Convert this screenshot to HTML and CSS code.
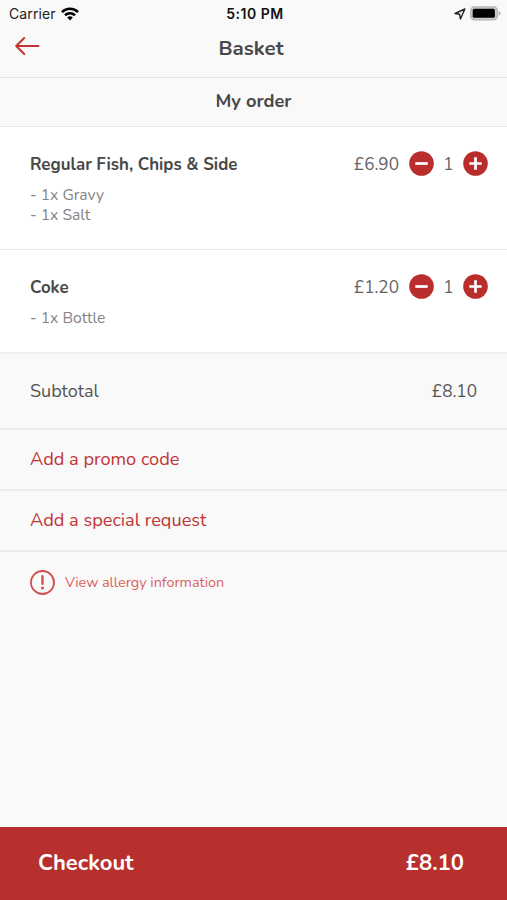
FILE: index.html
```html
<!DOCTYPE html>
<html lang="en">
<head>
<meta charset="utf-8">
<title>Basket</title>
<link rel="stylesheet" href="styles.css">
</head>
<body>
<div class="screen">
  <header class="top">
    <div class="status">
      <div class="carrier"><span>Carrier</span>
        <svg width="18" height="14" viewBox="0 0 18 14"><g fill="none" stroke="#000" stroke-width="2.6"><path d="M1 5.1a11.4 11.4 0 0 1 16 0"/><path d="M4 8.3a7.2 7.2 0 0 1 10 0"/></g><path d="M9 13.4 6.2 10.5a4 4 0 0 1 5.6 0z"/></svg>
      </div>
      <div class="clock">5:10 PM</div>
      <div class="indicators">
        <svg width="12" height="12" viewBox="0 0 12 12"><path d="M10.9 1 1 5.5l4.6.8.8 4.7z" fill="none" stroke="#222" stroke-width="1.4" stroke-linejoin="round"/></svg>
        <svg width="31" height="15" viewBox="0 0 31 15"><rect x=".8" y=".8" width="26.4" height="13" rx="3.6" fill="#ccc" stroke="#b4b4b4" stroke-width="1.3"/><rect x="2.7" y="2.8" width="22.2" height="9" rx="1.6"/><path d="M28.7 5c2.3.8 2.3 3.8 0 4.6z" fill="#aaa"/></svg>
      </div>
    </div>
    <div class="nav">
      <svg class="back" width="26" height="20" viewBox="0 0 26 20"><path d="M23.5 10H1.5M9.2 2 1.2 10l8 8" fill="none" stroke="#c23331" stroke-width="2" stroke-linecap="round" stroke-linejoin="round"/></svg>
      <h1>Basket</h1>
    </div>
  </header>
  <h2 class="section">My order</h2>

  <section class="item">
    <div class="line">
      <h3>Regular Fish, Chips &amp; Side</h3>
      <span class="price">£6.90</span>
      <svg class="btn" width="25" height="25" viewBox="0 0 25 25"><circle cx="12.5" cy="12.5" r="12.3"/><path d="M6.3 12.5h12.4"/></svg>
      <span class="qty">1</span>
      <svg class="btn" width="25" height="25" viewBox="0 0 25 25"><circle cx="12.5" cy="12.5" r="12.3"/><path d="M6.3 12.5h12.4M12.5 6.3v12.4"/></svg>
    </div>
    <ul><li>- 1x Gravy</li><li>- 1x Salt</li></ul>
  </section>

  <section class="item short">
    <div class="line">
      <h3>Coke</h3>
      <span class="price">£1.20</span>
      <svg class="btn" width="25" height="25" viewBox="0 0 25 25"><circle cx="12.5" cy="12.5" r="12.3"/><path d="M6.3 12.5h12.4"/></svg>
      <span class="qty">1</span>
      <svg class="btn" width="25" height="25" viewBox="0 0 25 25"><circle cx="12.5" cy="12.5" r="12.3"/><path d="M6.3 12.5h12.4M12.5 6.3v12.4"/></svg>
    </div>
    <ul><li>- 1x Bottle</li></ul>
  </section>

  <div class="subtotal"><span>Subtotal</span><span class="sum">£8.10</span></div>
  <div class="action"><span>Add a promo code</span></div>
  <div class="action"><span>Add a special request</span></div>
  <div class="allergy">
    <svg width="25" height="25" viewBox="0 0 25 25"><circle cx="12.5" cy="12.5" r="11.5" fill="none" stroke="#d14c4c" stroke-width="1.8"/><path d="M12.5 6.2v7.7" stroke="#d14c4c" stroke-width="2.3" stroke-linecap="round"/><circle cx="12.5" cy="18" r="1.5" fill="#d14c4c"/></svg>
    <span>View allergy information</span>
  </div>
  <footer class="checkout"><span>Checkout</span><span class="total">£8.10</span></footer>
</div>
</body>
</html>
```

FILE: styles.css
```css
* { box-sizing: border-box; }
body { margin: 0; background: #f9f9f9; }
h1, h2, h3, ul { margin: 0; padding: 0; }
svg { display: block; flex: none; }
.screen {
  width: 507px;
  height: 900px;
  display: flex;
  flex-direction: column;
  background: #f9f9f9;
  color: #484848;
  font-family: Nunito, Lato, sans-serif;
  white-space: nowrap;
  overflow: hidden;
}
.top { height: 78px; border-bottom: 1px solid #e5e5e5; }
.status {
  height: 27px;
  display: grid;
  grid-template-columns: 1fr auto 1fr;
  align-items: center;
  padding: 0 6px 0 9px;
  font: 14px Inter, sans-serif;
  letter-spacing: .1px;
  color: #222;
}
.carrier { display: flex; align-items: center; gap: 5px; }
.clock { font-weight: 600; color: #111; letter-spacing: .5px; }
.indicators { display: flex; justify-content: flex-end; align-items: center; gap: 4px; }
.nav {
  height: 42px;
  display: grid;
  grid-template-columns: 26px 1fr 26px;
  align-items: center;
  padding: 0 20px 0 15px;
}
.back { margin-top: -4px; }
h1 { font-size: 20.5px; font-weight: 700; text-align: center; margin-top: -1px; }
.section {
  height: 49px;
  border-bottom: 1px solid #e8e8e8;
  font-size: 18.3px;
  line-height: 47px;
  text-align: center;
}
.item {
  height: 123px;
  padding: 24px 19px 0 30px;
  background: #fff;
  border-bottom: 1px solid #e8e8e8;
}
.short { height: 104px; border-bottom: 2px solid #eee; }
.line { display: flex; align-items: center; height: 25px; }
h3 { flex: 1; font-size: 16.9px; padding-top: 1px; }
.price { font-size: 17.2px; color: #606468; margin-right: 10px; padding-top: 2px; }
.qty { width: 29px; font-size: 17.2px; text-align: center; color: #606468; padding-top: 2px; }
.btn circle { fill: #b92d2c; }
.btn path { stroke: #fff; stroke-width: 2.7; fill: none; }
ul { list-style: none; margin-top: 10px; font-size: 15.7px; line-height: 19.5px; color: #858585; }
.subtotal {
  height: 76px;
  display: flex;
  justify-content: space-between;
  align-items: center;
  padding: 0 30px;
  border-bottom: 2px solid #ececec;
  font-size: 18px;
  color: #555;
}
.sum { font-size: 17.2px; }
.action {
  height: 61px;
  border-bottom: 2px solid #ececec;
  padding-left: 30px;
  font-size: 18.2px;
  line-height: 59px;
  color: #c03434;
}
.allergy {
  height: 61px;
  display: flex;
  align-items: center;
  gap: 10px;
  padding-left: 30px;
  font-size: 14.4px;
  color: #d95f60;
}
.allergy span { padding-bottom: 2px; }
.checkout {
  margin-top: auto;
  height: 73px;
  display: flex;
  justify-content: space-between;
  align-items: center;
  padding: 0 43px 2px 38px;
  background: #b8302e;
  color: #fff;
  font-size: 22px;
  font-weight: 700;
}
```
